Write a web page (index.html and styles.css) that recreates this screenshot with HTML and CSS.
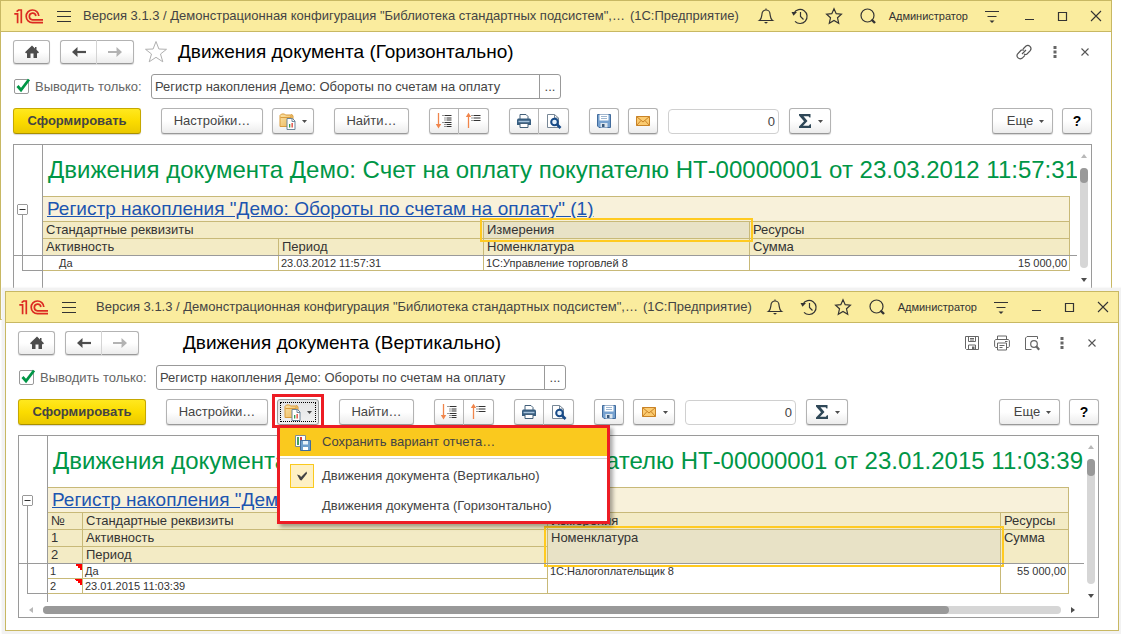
FILE: index.html
```html
<!DOCTYPE html>
<html lang="ru">
<head>
<meta charset="utf-8">
<title>Движения документа</title>
<link rel="stylesheet" href="styles.css">
</head>
<body>
<svg class="sprite" aria-hidden="true">
  <defs>
    <linearGradient id="fold" x1="0" y1="0" x2="1" y2="1"><stop offset="0" stop-color="#fbe3a6"/><stop offset="1" stop-color="#ecb557"/></linearGradient>
    <symbol id="i-logo" viewBox="0 0 30 15"><g fill="none" stroke="#dc2a22" stroke-width="1.7"><path d="M.3 4.9H3.6V14.2"/><path d="M2.6 2.6 4.6 1H7.3V14.2"/><path d="M24.8 7A6.3 6.3 0 1 0 18.5 13.6H29"/><path d="M21.9 7A3.3 3.3 0 1 0 18.5 10.8H29"/></g></symbol>
    <symbol id="i-menu" viewBox="0 0 16 16"><path d="M1 3.5H15M1 8.5H15M1 13.5H15" fill="none" stroke="#333" stroke-width="1.2"/></symbol>
    <symbol id="i-bell" viewBox="0 0 18 18"><path d="M2.5 13.5C4.8 12 4.5 9.500 5 7A4 4 0 0 1 13 7C13.500 9.500 13.200 12 15.500 13.500ZM9 3V1.500" fill="none" stroke="#333" stroke-width="1.200"/><path d="M7 15H11L9 16.800Z" fill="#333"/></symbol>
    <symbol id="i-history" viewBox="0 0 18 18"><path d="M3 6A7 7 0 1 1 4 14.300M9.500 5V9.500L12.500 12.500" fill="none" stroke="#333" stroke-width="1.200"/><path d="M.5 5H6L2.500 8.800Z" fill="#333"/></symbol>
    <symbol id="i-star" viewBox="0 0 18 18"><path d="M9 1.800 11.200 6.700 16.400 7.200 12.500 10.800 13.700 16.200 9 13.400 4.300 16.200 5.500 10.800 1.600 7.200 6.800 6.700Z" fill="none" stroke="#333" stroke-width="1.200"/></symbol>
    <symbol id="i-search" viewBox="0 0 18 18"><circle cx="8.500" cy="8.500" r="6.500" fill="none" stroke="#333" stroke-width="1.200"/><path d="M12.500 12.500 16 16" stroke="#333" stroke-width="2.400"/></symbol>
    <symbol id="i-service" viewBox="0 0 16 16"><path d="M1 3.500H15M3.500 8.500H12.500" stroke="#333" stroke-width="1.200"/><path d="M5.500 12.500H10.500L8 15Z" fill="#333"/></symbol>
    <symbol id="i-min" viewBox="0 0 12 12"><path d="M1 9.500H10" stroke="#333"/></symbol>
    <symbol id="i-max" viewBox="0 0 12 12"><path d="M1.500 2.500H9.500V10.500H1.500Z" fill="none" stroke="#333" stroke-width="1.200"/></symbol>
    <symbol id="i-close" viewBox="0 0 12 12"><path d="M1 1 11 11M11 1 1 11" stroke="#333" stroke-width="1.100"/></symbol>
    <symbol id="i-home" viewBox="0 0 16 16"><path d="M8 1.500 1 8.200 2.200 9.400 3 8.700V14H6.500V9.500H9.500V14H13V8.700L13.800 9.400 15 8.200 12.500 5.800V3H11V4.400Z" fill="#4d4d4d"/></symbol>
    <symbol id="i-left" viewBox="0 0 16 16"><path d="M15 8H4" stroke="#4d4d4d" stroke-width="2.200"/><path d="M6.500 3 1 8 6.500 13V9.500L5 8 6.500 6.500Z" fill="#4d4d4d"/></symbol>
    <symbol id="i-right" viewBox="0 0 16 16"><path d="M1 8H12" stroke="#b3b3b3" stroke-width="2"/><path d="M9.500 3 15 8 9.500 13V9.500L11 8 9.500 6.500Z" fill="#b3b3b3"/></symbol>
    <symbol id="i-fav" viewBox="0 0 24 24"><path d="M12 1.500 14.900 9 22.500 9.300 16.500 14 18.800 21.800 12 17.300 5.200 21.800 7.500 14 1.500 9.300 9.100 9Z" fill="#fff" stroke="#b0b0b0"/></symbol>
    <symbol id="i-tick" viewBox="0 0 17 17"><path d="M3.500 8 7 12 15 1.500" fill="none" stroke="#009646" stroke-width="2.800"/></symbol>
    <symbol id="i-link" viewBox="0 0 18 18"><g fill="none" stroke="#555" stroke-width="1.200"><path d="M8 6 11 3A3.200 3.200 0 0 1 15.500 7.300L12 11Q10.500 12 9 11"/><path d="M10 12.300 7 15.300A3.200 3.200 0 0 1 2.500 11L6 7.300Q7.500 6.300 9 7.300M7 11 11 7"/></g></symbol>
    <symbol id="i-dots" viewBox="0 0 4 12"><path d="M.5 0H3.500V3H.5ZM.5 4.500H3.500V7.500H.5ZM.5 9H3.500V12H.5Z" fill="#666"/></symbol>
    <symbol id="i-x" viewBox="0 0 10 10"><path d="M1.500 1.500 8.500 8.500M8.500 1.500 1.500 8.500" stroke="#555" stroke-width="1.100"/></symbol>
    <symbol id="i-gsave" viewBox="0 0 16 16"><path d="M1.500 1.500H14.500V14.500H2.500L1.500 13.500ZM4.500 1.500V6.500H11.500V1.500M6 3.500H10M6 5H10M4.500 14V10H11.500V14" fill="none" stroke="#666"/><path d="M8 11.500H10.500V14H8Z" fill="#666"/></symbol>
    <symbol id="i-gprint" viewBox="0 0 16 16"><path d="M3.500 4V1H12.500V4M3 12.500H1.800L.6 11.500V5.500L1.800 4.500H14.200L15.400 5.500V11.500L14.200 12.500H13M3.500 8H12.500V15H3.500ZM5.500 10.500H10.500M5.500 12.500H8.500M11 6.500H13.500" fill="none" stroke="#666"/></symbol>
    <symbol id="i-gview" viewBox="0 0 16 16"><path d="M13.500 4V1.500H3L1.500 3V14.500H7.500" fill="none" stroke="#666"/><circle cx="10" cy="9" r="3.300" fill="none" stroke="#666" stroke-width="1.200"/><path d="M12 11 15.200 14.700" stroke="#666" stroke-width="2.200"/></symbol>
    <symbol id="i-variants" viewBox="0 0 17 17"><path d="M1 13.500V2.500L2.500 1H5.500L6.500 2H12L13 1.500 14 3V13.500Z" fill="url(#fold)" stroke="#d99b3c"/><path d="M1.500 4.500H12M12 2.500V5" stroke="#d99b3c"/><path d="M8 5.500H13.500L16 8V16.500H8Z" fill="#fff" stroke="#6d8599"/><path d="M13 5.500V8.500H16" fill="none" stroke="#6d8599"/><path d="M10 11H11.300V14.500H10Z" fill="#2e9e4f"/><path d="M12.500 10H13.800V14.500H12.500Z" fill="#e03c31"/></symbol>
    <symbol id="i-down" viewBox="0 0 5 3"><path d="M0 0H5L2.500 3Z" fill="#4d4d4d"/></symbol>
    <symbol id="i-expand" viewBox="0 0 18 18"><path d="M3.500 1V13" stroke="#f0854b" stroke-width="1.300"/><path d="M.8 12H6.200L3.500 16.500Z" fill="#f0854b"/><path d="M7.500 3.500H16.500M9.500 6H16.500M9.500 8H16.500M7.500 10.500H16.500M9.500 12.500H16.500M9.500 14.500H16.500" stroke="#333" stroke-dasharray="1 1 10"/></symbol>
    <symbol id="i-collapse" viewBox="0 0 18 18"><path d="M3.500 4V16" stroke="#f0854b" stroke-width="1.300"/><path d="M.8 5H6.200L3.500 .8Z" fill="#f0854b"/><path d="M6.500 3.500H15.500M6.500 6H15.500M6.500 8.500H15.500" stroke="#333" stroke-dasharray="1 1 10"/></symbol>
    <symbol id="i-print" viewBox="0 0 16 16"><path d="M4 6V1.500H10L12 3.500V6" fill="#fff" stroke="#44607a"/><path d="M2 5.500H14L15 6.500V12H1V6.500Z" fill="#385e80"/><path d="M2.500 8.500H13.500" stroke="#a7c3dc" stroke-width="1.500"/><path d="M4 10.500H12V14.500H4Z" fill="#fff" stroke="#44607a"/></symbol>
    <symbol id="i-view" viewBox="0 0 16 16"><path d="M1.500 1.500H8.500L12.500 5V14.500H1.500Z" fill="#fff" stroke="#778796"/><path d="M8.500 1.500V5H12.500" fill="none" stroke="#778796"/><circle cx="8.500" cy="9" r="3.300" fill="#e5f1fc" stroke="#174a87" stroke-width="2"/><path d="M11 11.500 14.500 15" stroke="#174a87" stroke-width="2.600"/></symbol>
    <symbol id="i-save" viewBox="0 0 16 16"><path d="M1.500 1.500H14.500V14.500H3L1.500 13Z" fill="#76a1cf" stroke="#426c9d"/><path d="M3.500 1.500H12.500V7.500H3.500Z" fill="#fff"/><path d="M5 3.500H11M5 5.500H11" stroke="#9db6d0"/><path d="M4.500 10H11.500V14.500H4.500Z" fill="#dbe5ee"/><path d="M6 11H8.500V14H6Z" fill="#39597c"/></symbol>
    <symbol id="i-mail" viewBox="0 0 16 12"><path d="M1.500 1.500H14.500V10.500H1.500Z" fill="#fbcb70" stroke="#c98327"/><path d="M1.500 1.500 8 7 14.500 1.500M1.500 10.500 6 5.500M14.500 10.500 10 5.500" fill="none" stroke="#c98327"/></symbol>
    <symbol id="i-sum" viewBox="0 0 14 16"><path d="M1 1H12.500V4.500H11.500L10.500 3.300H5.500L9.500 8 5 12.800H10.800L12 11.300H13V15H1V13.500L6 8.200 1 2.500Z" fill="#2f4858"/></symbol>
    <symbol id="i-savevar" viewBox="0 0 17 17"><path d="M1.500 1.500H11.500V12.500H1.500Z" fill="#fff" stroke="#7e8c93"/><path d="M3 3H5V11H3Z" fill="#49a35b"/><path d="M6 3H8V11H6Z" fill="#dd4037"/><path d="M6.500 6.500H16.500V16.500H6.500Z" fill="#6d9dcb" stroke="#426c9d"/><path d="M9 7H14V10.500H9Z" fill="#e8f1f8"/><path d="M9 13H14V16H9Z" fill="#fff"/></symbol>
    <symbol id="i-check" viewBox="0 0 10 10"><path d="M0 3.500 3 4.500 4 6 9.500 .5 10 2.500 4.500 9.500 3 9Z" fill="#444"/></symbol>
    <symbol id="i-minus" viewBox="0 0 11 11"><path d="M1 .5H10L10.500 1V10L10 10.500H1L.5 10V1Z" fill="#fff" stroke="#999"/><path d="M2.500 5.500H8.500" stroke="#333"/></symbol>
    <symbol id="i-up-s" viewBox="0 0 6 4"><path d="M0 4 3 0 6 4Z" fill="#b8b8b8"/></symbol>
    <symbol id="i-down-s" viewBox="0 0 6 4"><path d="M0 0 3 4 6 0Z" fill="#4d4d4d"/></symbol>
    <symbol id="i-left-s" viewBox="0 0 4 6"><path d="M4 0 0 3 4 6Z" fill="#b8b8b8"/></symbol>
    <symbol id="i-right-s" viewBox="0 0 4 6"><path d="M0 0 4 3 0 6Z" fill="#4d4d4d"/></symbol>
  </defs>
</svg>

<section class="window window-back" aria-label="Движения документа (Горизонтально)">
  <header class="titlebar">
    <svg class="logo"><use href="#i-logo"/></svg>
    <button class="bar-btn main-menu" aria-label="Меню"><svg class="s16"><use href="#i-menu"/></svg></button>
    <span class="app-title">Версия 3.1.3 / Демонстрационная конфигурация "Библиотека стандартных подсистем",…</span>
    <span class="app-kind">(1С:Предприятие)</span>
    <div class="bar-tools">
      <button class="bar-btn" aria-label="Уведомления"><svg class="s18"><use href="#i-bell"/></svg></button>
      <button class="bar-btn" aria-label="История"><svg class="s18"><use href="#i-history"/></svg></button>
      <button class="bar-btn" aria-label="Избранное"><svg class="s18"><use href="#i-star"/></svg></button>
      <button class="bar-btn" aria-label="Поиск"><svg class="s18"><use href="#i-search"/></svg></button>
    </div>
    <a class="user" href="#">Администратор</a>
    <button class="bar-btn service" aria-label="Сервис"><svg class="s16"><use href="#i-service"/></svg></button>
    <div class="win-tools">
      <button class="bar-btn" aria-label="Свернуть"><svg class="s12"><use href="#i-min"/></svg></button>
      <button class="bar-btn" aria-label="Развернуть"><svg class="s12"><use href="#i-max"/></svg></button>
      <button class="bar-btn" aria-label="Закрыть"><svg class="s12"><use href="#i-close"/></svg></button>
    </div>
  </header>
  <main class="content">
    <div class="nav-row">
      <button class="btn home" aria-label="Домой"><svg class="s16"><use href="#i-home"/></svg></button>
      <div class="group nav-group">
        <button class="btn" aria-label="Назад"><svg class="s16"><use href="#i-left"/></svg></button>
        <button class="btn" aria-label="Вперед"><svg class="s16"><use href="#i-right"/></svg></button>
      </div>
      <div class="fav-slot"><button class="bar-btn" aria-label="В избранное"><svg class="s24"><use href="#i-fav"/></svg></button></div>
      <h1 class="form-title">Движения документа (Горизонтально)</h1>
      <div class="form-tools">
        <button class="bar-btn" aria-label="Ссылка"><svg class="s18"><use href="#i-link"/></svg></button>
        <button class="bar-btn more" aria-label="Еще"><svg class="dots"><use href="#i-dots"/></svg></button>
        <button class="bar-btn" aria-label="Закрыть форму"><svg class="s10"><use href="#i-x"/></svg></button>
      </div>
    </div>
    <div class="filter-row">
      <label class="check-label"><span class="check"><input type="checkbox" checked><svg><use href="#i-tick"/></svg></span>Выводить только:</label>
      <div class="field"><input type="text" aria-label="Регистр" value="Регистр накопления Демо: Обороты по счетам на оплату"><button aria-label="Выбрать">...</button></div>
    </div>
    <div class="toolbar">
      <button class="btn primary">Сформировать</button>
      <div class="cluster">
        <button class="btn settings">Настройки…</button>
        <button class="btn drop" aria-label="Варианты отчета"><svg class="s17"><use href="#i-variants"/></svg><svg class="caret"><use href="#i-down"/></svg></button>
      </div>
      <button class="btn find">Найти…</button>
      <div class="group">
        <button class="btn icon" aria-label="Развернуть группы"><svg class="s18"><use href="#i-expand"/></svg></button>
        <button class="btn icon" aria-label="Свернуть группы"><svg class="s18"><use href="#i-collapse"/></svg></button>
      </div>
      <div class="group">
        <button class="btn icon" aria-label="Печать"><svg class="s16"><use href="#i-print"/></svg></button>
        <button class="btn icon" aria-label="Просмотр"><svg class="s16"><use href="#i-view"/></svg></button>
      </div>
      <div class="cluster">
        <button class="btn icon" aria-label="Сохранить"><svg class="s16"><use href="#i-save"/></svg></button>
        <button class="btn icon" aria-label="Отправить"><svg class="mail"><use href="#i-mail"/></svg></button>
        <input class="number" type="text" aria-label="Сумма" value="0">
        <button class="btn drop" aria-label="Сумма выделенных"><svg class="sum"><use href="#i-sum"/></svg><svg class="caret"><use href="#i-down"/></svg></button>
      </div>
      <div class="cluster right">
        <button class="btn more-btn">Еще<svg class="caret"><use href="#i-down"/></svg></button>
        <button class="btn icon help">?</button>
      </div>
    </div>
    <div class="report">
      <div class="sheet">
        <div class="gutter"></div>
        <h2 class="headline">Движения документа Демо: Счет на оплату покупателю НТ-00000001 от 23.03.2012 11:57:31</h2>
        <div class="gutter tree"><button class="bar-btn" aria-label="Свернуть"><svg class="s11"><use href="#i-minus"/></svg></button><span class="branch"></span></div>
        <table class="grid grid-wide">
          <colgroup><col class="c236"><col class="c205"><col class="c266"><col></colgroup>
          <thead>
            <tr class="section"><th colspan="4"><a href="#">Регистр накопления "Демо: Обороты по счетам на оплату" (1)</a></th></tr>
            <tr><th colspan="2">Стандартные реквизиты</th><th class="selected">Измерения</th><th>Ресурсы</th></tr>
            <tr><th>Активность</th><th>Период</th><th>Номенклатура</th><th>Сумма</th></tr>
          </thead>
          <tbody>
            <tr><td class="indent">Да</td><td>23.03.2012 11:57:31</td><td>1С:Управление торговлей 8</td><td class="num">15 000,00</td></tr>
          </tbody>
        </table>
        <div class="gutter"></div>
      </div>
      <div class="vscroll"><svg class="arrow-v"><use href="#i-up-s"/></svg><div class="track"><div class="thumb"></div></div><svg class="arrow-v"><use href="#i-down-s"/></svg></div>
    </div>
  </main>
</section>

<section class="window window-front" aria-label="Движения документа (Вертикально)">
  <header class="titlebar">
    <svg class="logo"><use href="#i-logo"/></svg>
    <button class="bar-btn main-menu" aria-label="Меню"><svg class="s16"><use href="#i-menu"/></svg></button>
    <span class="app-title">Версия 3.1.3 / Демонстрационная конфигурация "Библиотека стандартных подсистем",…</span>
    <span class="app-kind">(1С:Предприятие)</span>
    <div class="bar-tools">
      <button class="bar-btn" aria-label="Уведомления"><svg class="s18"><use href="#i-bell"/></svg></button>
      <button class="bar-btn" aria-label="История"><svg class="s18"><use href="#i-history"/></svg></button>
      <button class="bar-btn" aria-label="Избранное"><svg class="s18"><use href="#i-star"/></svg></button>
      <button class="bar-btn" aria-label="Поиск"><svg class="s18"><use href="#i-search"/></svg></button>
    </div>
    <a class="user" href="#">Администратор</a>
    <button class="bar-btn service" aria-label="Сервис"><svg class="s16"><use href="#i-service"/></svg></button>
    <div class="win-tools">
      <button class="bar-btn" aria-label="Свернуть"><svg class="s12"><use href="#i-min"/></svg></button>
      <button class="bar-btn" aria-label="Развернуть"><svg class="s12"><use href="#i-max"/></svg></button>
      <button class="bar-btn" aria-label="Закрыть"><svg class="s12"><use href="#i-close"/></svg></button>
    </div>
  </header>
  <main class="content">
    <div class="nav-row">
      <button class="btn home" aria-label="Домой"><svg class="s16"><use href="#i-home"/></svg></button>
      <div class="group nav-group">
        <button class="btn" aria-label="Назад"><svg class="s16"><use href="#i-left"/></svg></button>
        <button class="btn" aria-label="Вперед"><svg class="s16"><use href="#i-right"/></svg></button>
      </div>
      <div class="fav-slot"></div>
      <h1 class="form-title">Движения документа (Вертикально)</h1>
      <div class="form-tools">
        <button class="bar-btn file" aria-label="Сохранить файл"><svg class="s16"><use href="#i-gsave"/></svg></button>
        <button class="bar-btn file" aria-label="Печать формы"><svg class="s16"><use href="#i-gprint"/></svg></button>
        <button class="bar-btn" aria-label="Предварительный просмотр"><svg class="s16"><use href="#i-gview"/></svg></button>
        <button class="bar-btn more" aria-label="Еще"><svg class="dots"><use href="#i-dots"/></svg></button>
        <button class="bar-btn" aria-label="Закрыть форму"><svg class="s10"><use href="#i-x"/></svg></button>
      </div>
    </div>
    <div class="filter-row">
      <label class="check-label"><span class="check"><input type="checkbox" checked><svg><use href="#i-tick"/></svg></span>Выводить только:</label>
      <div class="field"><input type="text" aria-label="Регистр" value="Регистр накопления Демо: Обороты по счетам на оплату"><button aria-label="Выбрать">...</button></div>
    </div>
    <div class="toolbar">
      <button class="btn primary">Сформировать</button>
      <div class="cluster">
        <button class="btn settings">Настройки…</button>
        <div class="drop-wrap">
          <button class="btn drop active" aria-label="Варианты отчета" aria-expanded="true"><svg class="s17"><use href="#i-variants"/></svg><svg class="caret"><use href="#i-down"/></svg></button>
          <div class="menu">
            <button class="menu-item current"><span class="mark"><svg class="s17"><use href="#i-savevar"/></svg></span>Сохранить вариант отчета…</button>
            <div class="menu-line"></div>
            <button class="menu-item"><span class="mark checked"><svg class="s10"><use href="#i-check"/></svg></span>Движения документа (Вертикально)</button>
            <button class="menu-item"><span class="mark"></span>Движения документа (Горизонтально)</button>
          </div>
        </div>
      </div>
      <button class="btn find">Найти…</button>
      <div class="group">
        <button class="btn icon" aria-label="Развернуть группы"><svg class="s18"><use href="#i-expand"/></svg></button>
        <button class="btn icon" aria-label="Свернуть группы"><svg class="s18"><use href="#i-collapse"/></svg></button>
      </div>
      <div class="group">
        <button class="btn icon" aria-label="Печать"><svg class="s16"><use href="#i-print"/></svg></button>
        <button class="btn icon" aria-label="Просмотр"><svg class="s16"><use href="#i-view"/></svg></button>
      </div>
      <div class="cluster">
        <button class="btn icon" aria-label="Сохранить"><svg class="s16"><use href="#i-save"/></svg></button>
        <button class="btn drop" aria-label="Отправить"><svg class="mail"><use href="#i-mail"/></svg><svg class="caret"><use href="#i-down"/></svg></button>
        <input class="number" type="text" aria-label="Сумма" value="0">
        <button class="btn drop" aria-label="Сумма выделенных"><svg class="sum"><use href="#i-sum"/></svg><svg class="caret"><use href="#i-down"/></svg></button>
      </div>
      <div class="cluster right">
        <button class="btn more-btn">Еще<svg class="caret"><use href="#i-down"/></svg></button>
        <button class="btn icon help">?</button>
      </div>
    </div>
    <div class="report">
      <div class="sheet">
        <div class="gutter"></div>
        <h2 class="headline">Движения документа Демо: Счет на оплату покупателю НТ-00000001 от 23.01.2015 11:03:39</h2>
        <div class="gutter tree"><button class="bar-btn" aria-label="Свернуть"><svg class="s11"><use href="#i-minus"/></svg></button><span class="branch"></span></div>
        <table class="grid grid-tall">
          <colgroup><col class="c35"><col class="c465"><col><col class="c68"></colgroup>
          <thead>
            <tr class="section"><th colspan="4"><a href="#">Регистр накопления "Демо: Обороты по счетам на оплату" (1)</a></th></tr>
            <tr><th>№</th><th>Стандартные реквизиты</th><th>Измерения</th><th>Ресурсы</th></tr>
            <tr><th>1</th><th>Активность</th><th class="selected" rowspan="2">Номенклатура</th><th rowspan="2">Сумма</th></tr>
            <tr><th>2</th><th>Период</th></tr>
          </thead>
          <tbody>
            <tr><td class="noted">1</td><td>Да</td><td rowspan="2">1С:Налогоплательщик 8</td><td class="num" rowspan="2">55 000,00</td></tr>
            <tr><td class="noted">2</td><td>23.01.2015 11:03:39</td></tr>
          </tbody>
        </table>
        <div class="gutter"></div>
      </div>
      <div class="vscroll"><svg class="arrow-v"><use href="#i-up-s"/></svg><div class="track"><div class="thumb"></div></div><svg class="arrow-v"><use href="#i-down-s"/></svg></div>
      <div class="hscroll"><svg class="arrow-h"><use href="#i-left-s"/></svg><div class="track"><div class="thumb"></div></div><svg class="arrow-h"><use href="#i-right-s"/></svg></div>
    </div>
  </main>
</section>
</body>
</html>
```
FILE: styles.css
```css
* { box-sizing: border-box; }
html { height: 100%; }
body {
  position: relative;
  height: 100%;
  margin: 0;
  overflow: hidden;
  background: #fff;
  color: #444;
  font: 13px/16px "Liberation Sans", Arial, sans-serif;
}
.sprite { position: absolute; width: 0; height: 0; }
svg { display: block; flex: none; }
button, input { font: inherit; color: inherit; margin: 0; }
button { padding: 0; }

.s10 { width: 10px; height: 10px; }
.s11 { width: 11px; height: 11px; }
.s12 { width: 12px; height: 12px; }
.s16 { width: 16px; height: 16px; }
.s17 { width: 17px; height: 17px; }
.s18 { width: 18px; height: 18px; }
.s24 { width: 24px; height: 24px; }

/* Windows on the desktop */
.window {
  position: absolute;
  display: flex;
  flex-direction: column;
  background: #fff;
  border: 1px solid #c8b863;
}
.window-back { inset: 0 9px auto 0; height: 320px; }
.window-front {
  inset: 291px 2px 3px 5px;
  box-shadow: 0 0 0 3px #f2f2f2, 0 0 2px 3px #ebebeb;
}

/* Title bar */
.titlebar {
  display: flex;
  align-items: center;
  height: 31px;
  flex: none;
  padding: 0 9px 0 13px;
  background: #faec9e;
  border-bottom: 1px solid #c8b863;
}
.bar-btn {
  display: flex;
  background: none;
  border: 0;
}
.logo { width: 30px; height: 15px; }
.main-menu { margin-left: 12px; }
.app-title {
  margin-left: 11px;
  white-space: nowrap;
}
.window-front .app-title { margin-left: 19px; }
.app-kind { margin-left: 5px; white-space: nowrap; }
.bar-tools {
  display: flex;
  gap: 16px;
  margin-left: auto;
}
.user {
  margin-left: 12px;
  color: #333;
  font-size: 11px;
  text-decoration: none;
}
.service { margin-left: 16px; }
.win-tools {
  display: flex;
  gap: 21px;
  margin-left: 24px;
}
.window-front .win-tools { margin-left: 22px; }

/* Form */
.content {
  display: flex;
  flex-direction: column;
  flex: 1;
  min-height: 0;
  padding: 8px 19px 12px 12px;
}
.btn {
  display: flex;
  align-items: center;
  justify-content: center;
  height: 26px;
  background: linear-gradient(#fff 50%, #ececec);
  border: 1px solid #b3b3b3;
  border-bottom-color: #999;
  border-radius: 3px;
  box-shadow: 0 1px 1px #d8d8d8;
}
.group { display: flex; }
.group .btn:first-child { border-radius: 3px 0 0 3px; }
.group .btn:last-child {
  border-left: 0;
  border-radius: 0 3px 3px 0;
}
.nav-row { display: flex; align-items: center; height: 24px; }
.nav-row .btn { width: 37px; height: 24px; }
.nav-group { margin-left: 10px; }
.nav-group .btn:first-child { border-right-color: #d4d4d4; }
.fav-slot { width: 34px; margin-left: 10px; }
.form-title {
  margin: 0;
  color: #000;
  font-size: 19px;
  line-height: 24px;
  font-weight: normal;
}
.form-tools {
  display: flex;
  align-items: center;
  margin: 0 2px 0 auto;
}
.form-tools .file { margin-right: 14px; }
.form-tools .more { margin: 0 23px 0 20px; }
.dots { width: 4px; height: 12px; }

.filter-row {
  display: flex;
  align-items: center;
  height: 25px;
  margin-top: 10px;
}
.check-label {
  display: flex;
  align-items: center;
  width: 138px;
  padding-left: 1px;
  color: #666;
}
.check {
  position: relative;
  margin-right: 6px;
}
.check input {
  display: block;
  width: 15px;
  height: 15px;
  appearance: none;
  background: #fff;
  border: 1px solid #999;
  border-radius: 2px;
}
.check svg {
  position: absolute;
  top: -1px;
  left: 0;
  width: 17px;
  height: 17px;
  pointer-events: none;
}
.field {
  display: flex;
  width: 410px;
  height: 25px;
  border: 1px solid #999;
  border-radius: 3px;
}
.field input {
  flex: 1;
  min-width: 0;
  padding: 0 3px;
  background: none;
  border: 0;
  outline: 0;
}
.field button {
  width: 21px;
  background: none;
  border: 0;
  border-left: 1px solid #999;
}

.toolbar { display: flex; gap: 20px; margin-top: 9px; }
.cluster { display: flex; gap: 9px; }
.primary {
  width: 128px;
  background: linear-gradient(#ffe81f, #fbdc00 50%, #ebc900);
  border-color: #c6a800;
  border-bottom-color: #a98f00;
  font-weight: bold;
}
.settings { width: 102px; }
.find { width: 75px; }
.icon { width: 30px; }
.drop { width: 42px; gap: 6px; }
.caret { width: 5px; height: 3px; }
.mail { width: 16px; height: 12px; }
.sum { width: 14px; height: 16px; }
.number {
  align-self: flex-end;
  width: 111px;
  height: 25px;
  margin: 0 1px;
  padding: 0 3px;
  border: 1px solid #d0d0d0;
  border-radius: 4px;
  outline: 0;
  text-align: right;
}
.right { margin-left: auto; }
.more-btn { width: 61px; gap: 6px; padding-left: 6px; }
.help { color: #000; font-size: 14px; font-weight: bold; }

/* Report variants menu */
.drop-wrap { position: relative; }
.drop-wrap::before {
  content: "";
  position: absolute;
  inset: -5px -5px -3px;
  border: 3px solid #ed1c24;
  pointer-events: none;
}
.drop.active {
  background: linear-gradient(#e2e2e2, #f2f2f2);
  border-color: #999;
  outline: 1px dotted #000;
  outline-offset: -4px;
}
.menu {
  position: absolute;
  z-index: 2;
  top: 26px;
  left: 0;
  width: 333px;
  background: #fff;
  border: 3px solid #ed1c24;
  box-shadow: 3px 3px 4px #0005;
}
.menu-item {
  display: flex;
  align-items: center;
  width: 100%;
  height: 30px;
  padding-left: 10px;
  background: none;
  border: 0;
  white-space: nowrap;
}
.menu-item.current { height: 28px; background: #fac91e; }
.menu-line {
  height: 1px;
  margin: 2px 0;
  background: #d0d0d0;
}
.mark {
  display: flex;
  align-items: center;
  justify-content: center;
  width: 24px;
  height: 24px;
  margin-right: 8px;
}
.mark.checked { background: #fef0c3; border: 1px solid #fac91e; }

/* Report */
.report {
  display: grid;
  grid-template-columns: minmax(0, 1fr) 14px;
  grid-template-rows: minmax(0, 1fr) auto;
  flex: 1;
  min-height: 0;
  margin-top: 10px;
  border: 1px solid #9a9a9a;
}
.sheet {
  display: grid;
  grid-template-columns: 29px minmax(0, 1fr);
  grid-template-rows: 51px auto minmax(0, 1fr);
  overflow: hidden;
}
.gutter { border-right: 1px solid #9a9a9a; }
.headline {
  margin: 0;
  padding-left: 5px;
  color: #009646;
  font-size: 24px;
  line-height: 50px;
  font-weight: normal;
  white-space: nowrap;
}
.tree {
  display: flex;
  flex-direction: column;
  padding: 8px 0 0 3px;
}
.tree .bar-btn { align-self: flex-start; }
.branch {
  flex: 1;
  margin-left: 5px;
  border: solid #9a9a9a;
  border-width: 0 0 1px 1px;
}
.grid {
  --tail: 7px;
  width: calc(100% - var(--tail));
  table-layout: fixed;
  border-collapse: separate;
  border-spacing: 0;
  border-top: 1px solid #c8b978;
}
.grid-tall { --tail: 15px; }
.c35 { width: 35px; }
.c68 { width: 68px; }
.c205 { width: 205px; }
.c236 { width: 236px; }
.c266 { width: 266px; }
.c465 { width: 465px; }
.grid th, .grid td {
  height: 17px;
  padding: 0 3px;
  border: solid #c8b978;
  border-width: 0 1px 1px 0;
  color: #333;
  font-weight: normal;
  text-align: left;
  vertical-align: top;
  white-space: nowrap;
}
.grid th { background: #f3ebc5; font-size: 13px; line-height: 16px; }
.grid td {
  height: 15px;
  padding: 0 2px;
  font-size: 11px;
  line-height: 14px;
}
.grid .section th {
  height: 25px;
  padding-left: 4px;
  background: #f8f1da;
  font-size: 19px;
  line-height: 24px;
}
.section a { color: #1d55b0; text-decoration: underline; }
.grid td.indent { padding-left: 16px; }
.grid td.num { text-align: right; }
.grid tbody { position: relative; }
.grid tbody::before {
  content: "";
  position: absolute;
  top: -1px;
  left: -30px;
  right: calc(0px - var(--tail));
  height: 1px;
  background: #9a9a9a;
}
.grid th.selected { position: relative; background: #e8e2c6; }
.selected::after {
  content: "";
  position: absolute;
  inset: -4px;
  border: 2px solid #ffca20;
}
.grid td.noted {
  background: linear-gradient(45deg, #fff0 50%, #f00 50%) right top / 7px 7px no-repeat;
}

.track { background: #d6d6d6; border-radius: 4px; }
.thumb { background: #999; border-radius: 4px; }
.vscroll {
  display: flex;
  flex-direction: column;
  align-items: center;
  padding: 9px 0 4px;
}
.arrow-v { width: 6px; height: 4px; }
.arrow-h { width: 4px; height: 6px; }
.vscroll .track { flex: 1; width: 8px; margin: 10px 0; }
.vscroll .thumb { height: 15px; }
.window-back .vscroll { padding-bottom: 24px; }
.window-front .vscroll .thumb { height: 17px; }
.hscroll {
  grid-column: 1 / -1;
  display: flex;
  align-items: center;
  height: 15px;
  padding: 0 23px 0 10px;
}
.hscroll .track { flex: 1; height: 8px; margin: 0 10px; }
.hscroll .thumb { width: 89%; height: 8px; }
```
